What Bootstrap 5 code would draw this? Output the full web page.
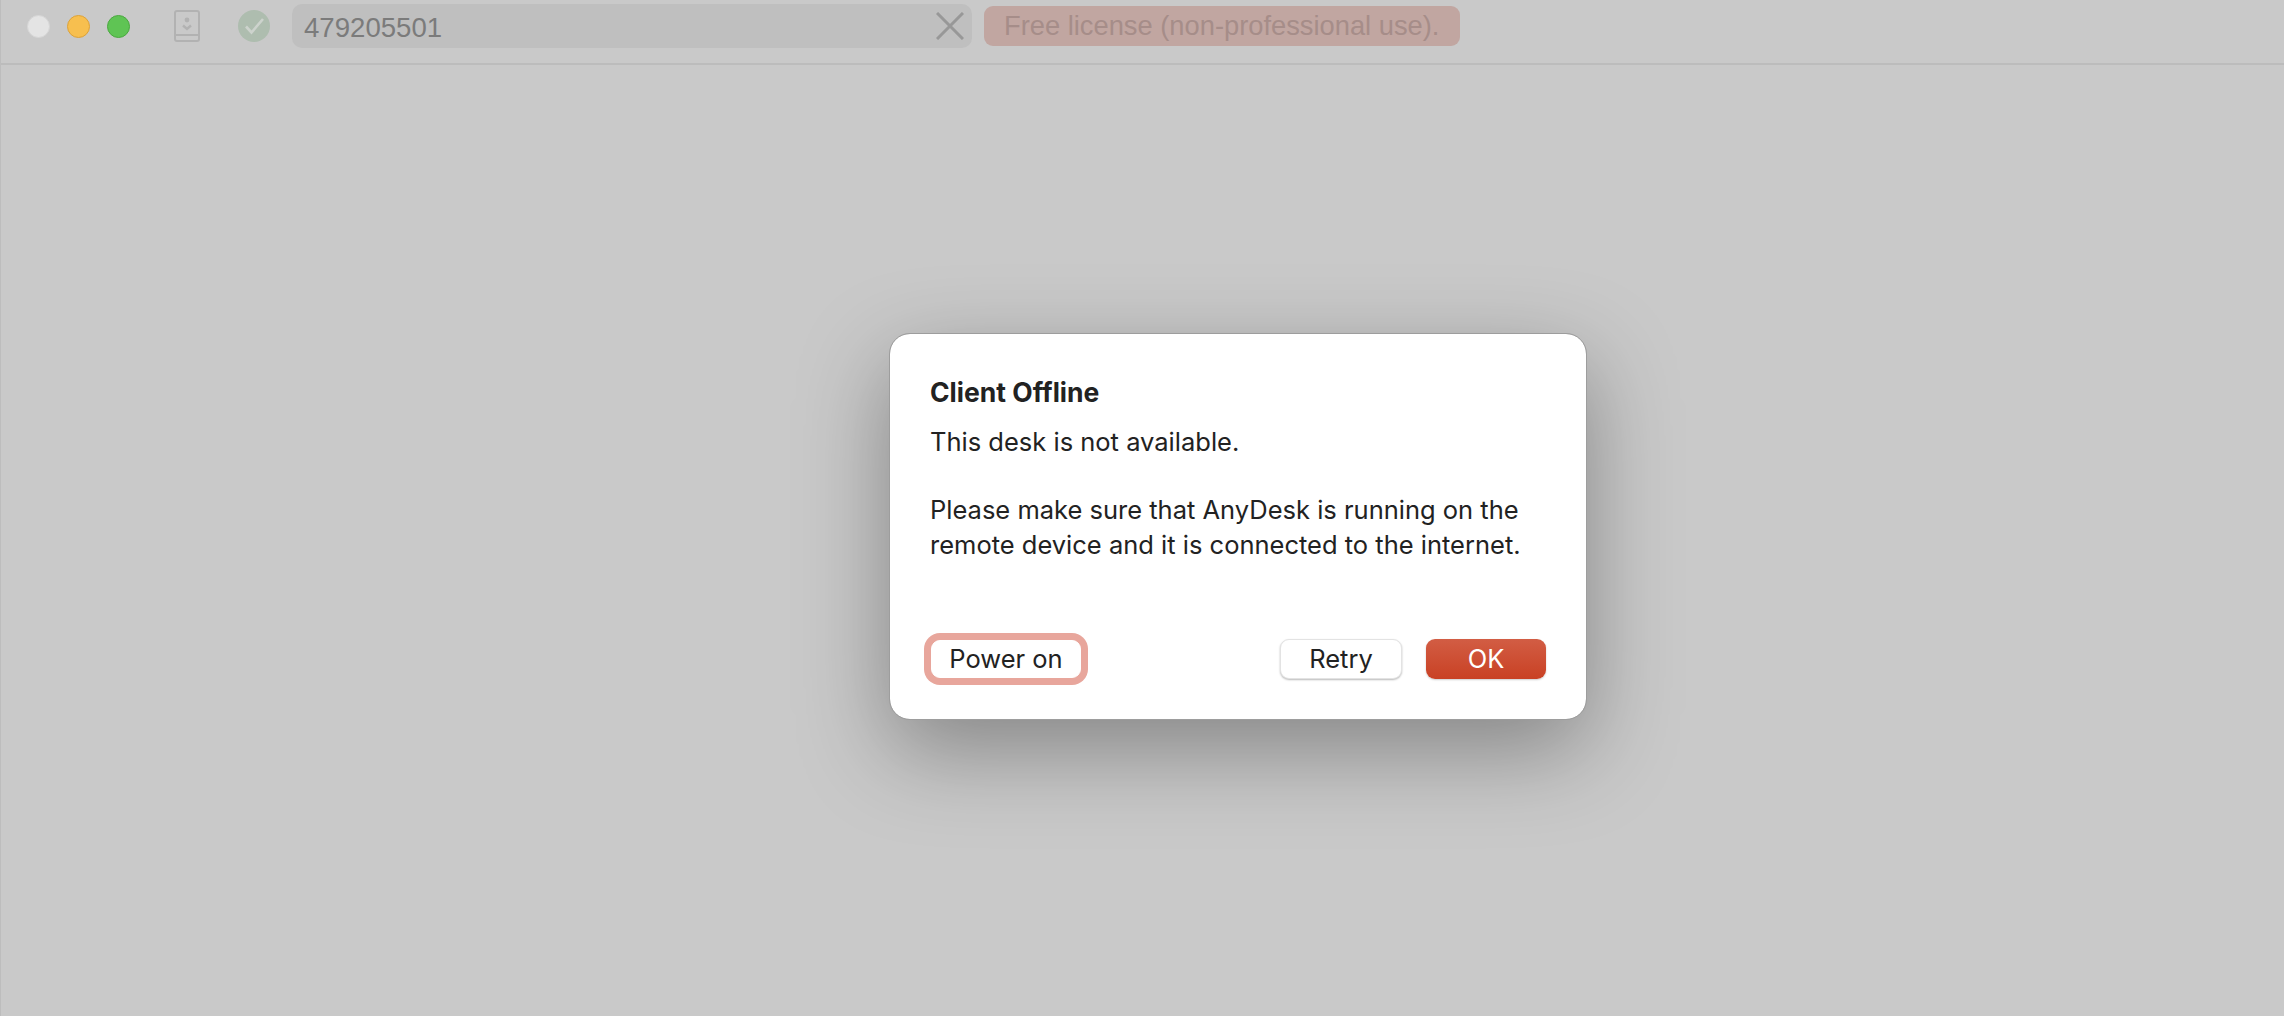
<!DOCTYPE html>
<html lang="en">
<head>
    <meta charset="UTF-8">
    <meta name="viewport" content="width=device-width, initial-scale=1.0">
    <title>AnyDesk</title>
    <link href="https://cdn.jsdelivr.net/npm/bootstrap@5.3.3/dist/css/bootstrap.min.css" rel="stylesheet">
    <style>
        html, body {
            height: 100%;
        }
        body {
            background-color: #c9c9c9;
            border-left: 1px solid #bdbdbd;
            overflow: hidden;
            font-family: Inter, "Liberation Sans", sans-serif;
        }

        /* Barra superior */
        .top-bar {
            height: 65px;
            padding: 0 0 11px 26px;
            border-bottom: 2px solid #bcbcbc;
        }
        .light {
            width: 23px;
            height: 23px;
            border-radius: 50%;
            flex: none;
        }
        .light + .light {
            margin-left: 17px;
        }
        .light-gray { background-color: #e4e4e4; border: 1px solid #d6d6d6; }
        .light-yellow { background-color: #f7bf4f; border: 1px solid #dca23a; }
        .light-green { background-color: #5fc454; border: 1px solid #4aa83f; }
        .device-icon {
            margin-left: 44px;
            flex: none;
        }
        .check-icon {
            margin-left: 38px;
            flex: none;
        }
        .id-field {
            width: 680px;
            height: 44px;
            margin-left: 22px;
            padding: 0 8px 0 12px;
            background-color: #bfbfbf;
            border-radius: 10px;
            color: #7b7b7b;
            font: 27.6px "Liberation Sans", sans-serif;
        }
        .id-number {
            padding-top: 3px;
        }
        .license-tag {
            width: 476px;
            height: 40px;
            margin-left: 12px;
            padding-left: 20px;
            background-color: #c1a6a1;
            border-radius: 9px;
            color: #a68d89;
            font: 27.3px "Liberation Sans", sans-serif;
        }

        /* Diálogo */
        .dialog-area {
            padding-top: 269px;
            padding-left: 889px;
        }
        .dialog-box {
            width: 696px;
            height: 385px;
            padding: 41px 40px 40px 40px;
            background-color: #fff;
            border-radius: 20px;
            outline: 1px solid #9d9d9d;
            box-shadow: 0 30px 90px rgba(0, 0, 0, .34);
            color: #222;
            font-size: 25.5px;
            line-height: 34.3px;
        }
        .dialog-title {
            font-size: 26.5px;
            font-weight: 700;
            line-height: 34px;
            margin-bottom: 16px;
        }
        .dialog-text {
            margin-bottom: 0;
        }
        .dialog-text + .dialog-text {
            margin-top: 34px;
        }
        .dlg-btn {
            height: 40px;
            padding: 0;
            border-radius: 9px;
            font-size: 25.5px;
            line-height: 38px;
            color: #222;
            background-color: #fff;
        }
        .btn-power {
            width: 150px;
            height: 38px;
            margin-left: 1px;
            line-height: 36px;
            border: 1px solid #fff;
            box-shadow: 0 0 0 7px #e8a69c;
        }
        .btn-retry {
            width: 122px;
            border: 1px solid #e3e3e3;
            box-shadow: 0 1px 2px rgba(0, 0, 0, .28);
        }
        .btn-ok {
            width: 120px;
            margin-left: 24px;
            border: 0;
            line-height: 40px;
            color: #fff;
            background: linear-gradient(#d25d44, #c94124);
            box-shadow: 0 1px 2px rgba(0, 0, 0, .2);
        }
        .btn-ok:hover {
            color: #fff;
            background: linear-gradient(#d25d44, #c94124);
        }
    </style>
</head>
<body>

    <!-- Barra superior -->
    <div class="top-bar d-flex align-items-center">
        <span class="light light-gray"></span>
        <span class="light light-yellow"></span>
        <span class="light light-green"></span>

        <svg class="device-icon" width="26" height="32" viewBox="0 0 26 32" fill="none" stroke="#b2b2b2" stroke-width="2">
            <rect x="1" y="1" width="24" height="30" rx="2"/>
            <path d="M1 25h24"/>
            <path d="M9 15.5l4 3.5 4-3.5" stroke-width="2.4"/>
            <circle cx="13" cy="10" r="2.4" fill="#b2b2b2" stroke="none"/>
        </svg>

        <svg class="check-icon" width="32" height="32" viewBox="0 0 32 32" fill="none">
            <circle cx="16" cy="16" r="16" fill="#aebdaf"/>
            <path d="M8 16.5l5.5 6L25 9" stroke="#cdd3cd" stroke-width="2.6"/>
        </svg>

        <div class="id-field d-flex align-items-center justify-content-between">
            <span class="id-number">479205501</span>
            <svg width="28" height="28" viewBox="0 0 28 28" fill="none" stroke="#989898" stroke-width="3">
                <path d="M1 1l26 26M27 1L1 27"/>
            </svg>
        </div>

        <div class="license-tag d-flex align-items-center">Free license (non-professional use).</div>
    </div>

    <!-- Diálogo -->
    <div class="dialog-area">
        <div class="dialog-box d-flex flex-column">
            <div class="dialog-title">Client Offline</div>
            <p class="dialog-text">This desk is not available.</p>
            <p class="dialog-text">Please make sure that AnyDesk is running on the<br>remote device and it is connected to the internet.</p>
            <div class="d-flex align-items-center mt-auto">
                <button type="button" class="btn dlg-btn btn-power">Power on</button>
                <button type="button" class="btn dlg-btn btn-retry ms-auto">Retry</button>
                <button type="button" class="btn dlg-btn btn-ok">OK</button>
            </div>
        </div>
    </div>

    <script src="https://cdn.jsdelivr.net/npm/bootstrap@5.3.3/dist/js/bootstrap.bundle.min.js"></script>
</body>
</html>
